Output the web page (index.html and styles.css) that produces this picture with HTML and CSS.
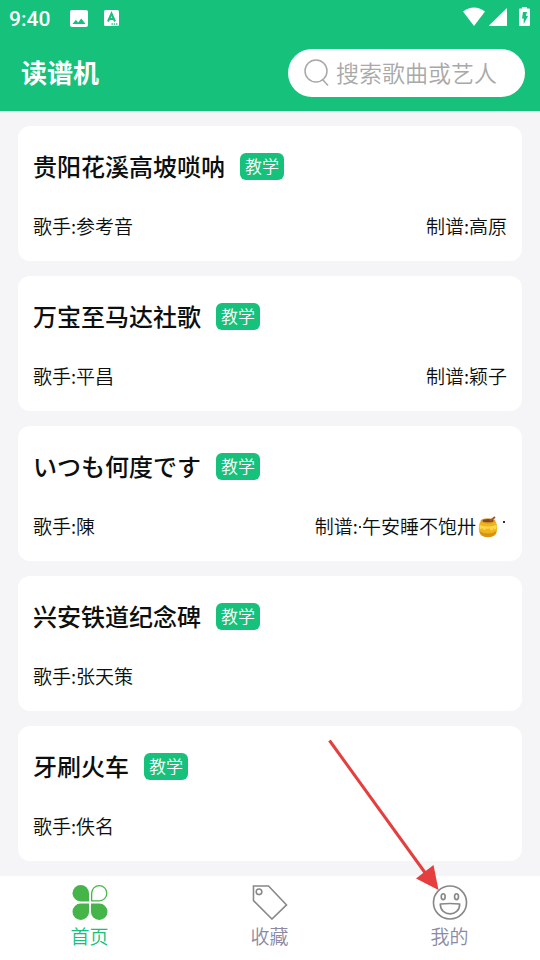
FILE: index.html
```html
<!DOCTYPE html>
<html lang="zh-CN">
<head>
    <meta charset="UTF-8">
    <meta name="viewport" content="width=device-width, initial-scale=1.0">
    <title>读谱机</title>
    <link rel="stylesheet" href="styles.css">
</head>
<body>
    <div class="app">
        <header class="header">
            <div class="status">
                <span class="time">9:40</span>
                <svg class="ico-photo" width="18" height="18" viewBox="0 0 18 18">
                    <path fill="#fff" fill-rule="evenodd" d="M2 0h14a2 2 0 0 1 2 2v13a2 2 0 0 1-2 2H2a2 2 0 0 1-2-2V2a2 2 0 0 1 2-2zM2.500 14h13l-4.200-5.500-3.200 4-2.200-2.700z"/>
                </svg>
                <svg class="ico-a" width="15" height="16" viewBox="0 0 15 16">
                    <rect width="15" height="16" rx="1.500" fill="#fff"/>
                    <path fill="none" stroke="#15c17b" stroke-width="2" d="M4 11.500l3.500-8 3.500 8M5 9h5"/>
                    <path stroke="#15c17b" stroke-width="1.300" stroke-dasharray="1.300 1" d="M7.500 14h6"/>
                </svg>
                <svg class="ico-system" width="68" height="20" viewBox="0 0 68 20">
                    <g fill="#fff">
                        <path d="M0 4.500Q11 -3.500 22 4.500L11 19z"/>
                        <path d="M26 18.500L44 1v18H26z"/>
                        <path d="M59 0h5v1.500h2a1 1 0 0 1 1 1V18a1 1 0 0 1-1 1h-9a1 1 0 0 1-1-1V2.500a1 1 0 0 1 1-1h2z"/>
                    </g>
                    <path fill="#15c17b" d="M60 5h4l-1.200 4H65l-4.300 8v-5.500H59z"/>
                </svg>
            </div>
            <div class="topbar">
                <h1>读谱机</h1>
                <div class="search">
                    <svg width="28" height="30" viewBox="0 0 28 30" fill="none" stroke="#a8a8a8" stroke-width="1.500">
                        <circle cx="12" cy="13" r="11"/>
                        <path d="M18.500 21.500l5.500 6"/>
                    </svg>
                    <span>搜索歌曲或艺人</span>
                </div>
            </div>
        </header>

        <main class="list">
            <div class="card">
                <div class="name"><h2>贵阳花溪高坡唢呐</h2><span class="tag">教学</span></div>
                <div class="info"><span>歌手:参考音</span><span>制谱:高原</span></div>
            </div>
            <div class="card">
                <div class="name"><h2>万宝至马达社歌</h2><span class="tag">教学</span></div>
                <div class="info"><span>歌手:平昌</span><span>制谱:颖子</span></div>
            </div>
            <div class="card">
                <div class="name"><h2 lang="ja">いつも何度です</h2><span class="tag">教学</span></div>
                <div class="info">
                    <span>歌手:陳</span>
                    <span class="maker">制谱:<i class="dot"></i>午安睡不饱卅<svg class="honey" width="20" height="22" viewBox="0 0 20 22">
                            <path fill="#f0b51c" d="M3 5C0 8 0 16 3.500 19.500q6.500 3.500 13 0C20 16 20 8 17 5z"/>
                            <path fill="#d99212" d="M1.500 15c0 8 17 8 17 0q-8.500 5-17 0z"/>
                            <path fill="#ffd84a" d="M1.500 9q8.500 3 17 0v3q-2 3-3 0-2 5-4 0-2 2-3 0-2 4-4 0-2 2-3 0z"/>
                            <ellipse cx="10" cy="5" rx="7.500" ry="2.800" fill="#dda02c"/>
                            <ellipse cx="10" cy="4.700" rx="5.500" ry="1.600" fill="#81471e"/>
                            <path stroke="#9a5734" stroke-width="1.800" d="M12 5l5-4"/>
                        </svg><i class="dot high"></i></span>
                </div>
            </div>
            <div class="card">
                <div class="name"><h2>兴安铁道纪念碑</h2><span class="tag">教学</span></div>
                <div class="info"><span>歌手:张天策</span></div>
            </div>
            <div class="card">
                <div class="name"><h2>牙刷火车</h2><span class="tag">教学</span></div>
                <div class="info"><span>歌手:佚名</span></div>
            </div>
        </main>

        <nav class="tabs">
            <div class="tab active">
                <svg width="36" height="36" viewBox="0 0 36 36" fill="#45b549">
                    <path d="M17 17H8.500a8.500 8.500 0 1 1 8.500-8.500z"/>
                    <path d="M17 19v8.500a8.500 8.500 0 1 1-8.500-8.500z"/>
                    <path d="M19 19h8.500a8.500 8.500 0 1 1-8.500 8.500z"/>
                    <path fill="#fff" stroke="#45b549" stroke-width="1.300" d="M19.700 16.300V8.500a7.800 7.800 0 1 1 7.800 7.800z"/>
                </svg>
                <span>首页</span>
            </div>
            <div class="tab">
                <svg width="36" height="36" viewBox="0 0 36 36" fill="none" stroke="#888" stroke-width="1.600">
                    <path d="M1 1h15.500l18.500 19.500-15 14.500L1 16z"/>
                    <circle cx="6.700" cy="7" r="2.900"/>
                </svg>
                <span>收藏</span>
            </div>
            <div class="tab">
                <svg width="36" height="36" viewBox="0 0 36 36" fill="none" stroke="#888" stroke-width="1.700">
                    <circle cx="18" cy="18" r="17"/>
                    <ellipse cx="11" cy="12" rx="2" ry="3"/>
                    <ellipse cx="24.700" cy="12" rx="2" ry="3"/>
                    <path d="M8 19.500q10-1 20 0c0 13.500-20 13.500-20 0z" stroke-linejoin="round"/>
                </svg>
                <span>我的</span>
            </div>
        </nav>

        <!-- seta apontando para a aba 我的 -->
        <svg class="arrow" width="112" height="152" viewBox="0 0 112 152">
            <path stroke="#e53e3e" stroke-width="3" d="M1.500 1.500L98 135"/>
            <path fill="#e53e3e" d="M110.500 151L88 139.500l17.500-13.500z"/>
        </svg>
    </div>
</body>
</html>
```
FILE: styles.css
```css
* {
    margin: 0;
    padding: 0;
    box-sizing: border-box;
}

body {
    background-color: #f5f5f8;
    font-family: "Noto Sans CJK SC", sans-serif;
    color: #0c0f0e;
}

.app {
    position: relative;
    display: flex;
    flex-direction: column;
    height: 960px;
    width: 540px;
    overflow: hidden;
}

.header {
    background-color: #15c17b;
    height: 111px;
    color: white;
}

.status {
    display: flex;
    align-items: center;
    height: 37px;
    padding: 0 9px 0 9px;
}

.time {
    font-family: Roboto, sans-serif;
    font-size: 21px;
    font-weight: 500;
    line-height: 37px;
    width: 61px;
    padding-top: 1px;
}

.ico-a {
    margin-left: 16px;
    margin-bottom: 1px;
}

.ico-system {
    margin-left: auto;
    margin-bottom: 3px;
}

.topbar {
    display: flex;
    justify-content: space-between;
    align-items: center;
    padding: 12px 15px 0 21px;
}

h1 {
    font-size: 26px;
    font-weight: 700;
    line-height: 46px;
    padding-bottom: 2px;
}

.search {
    display: flex;
    align-items: center;
    gap: 4px;
    width: 237px;
    height: 48px;
    padding-left: 16px;
    border-radius: 24px;
    background-color: white;
    color: #a9a9a9;
    font-size: 23px;
    font-weight: 350;
    line-height: 46px;
}

.search span {
    padding-bottom: 2px;
}

.list {
    flex: 1;
    display: flex;
    flex-direction: column;
    gap: 15px;
    padding: 15px 18px;
}

.card {
    height: 135px;
    padding: 20px 15px 0;
    border-radius: 12px;
    background-color: white;
}

.name {
    display: flex;
    align-items: center;
    gap: 15px;
    height: 40px;
}

h2 {
    font-size: 24px;
    font-weight: 500;
    line-height: 40px;
}

.tag {
    width: 44px;
    height: 27px;
    border-radius: 6px;
    background-color: #15c17b;
    color: white;
    font-size: 17px;
    font-weight: 350;
    line-height: 26px;
    text-align: center;
}

.info {
    display: flex;
    justify-content: space-between;
    margin-top: 25px;
    font-size: 19px;
    font-weight: 350;
    line-height: 30px;
}

.maker {
    display: flex;
    align-items: center;
}

.dot {
    width: 2px;
    height: 2px;
    margin: 2px 1px 0;
    background-color: #333;
}

.dot.high {
    margin: 0 2px 9px 5px;
}

.honey {
    margin: 2px 0 0 2px;
}

.tabs {
    display: flex;
    height: 84px;
    background-color: white;
}

.tab {
    flex: 1;
    display: flex;
    flex-direction: column;
    align-items: center;
    padding: 9px 1px 0 0;
    color: #8a8aa3;
    font-size: 19px;
    font-weight: 350;
    line-height: 32px;
}

.tab svg {
    width: 36px;
    height: 35px;
}

.tab.active {
    color: #15c17b;
}

.arrow {
    position: absolute;
    left: 328px;
    top: 739px;
}
```
